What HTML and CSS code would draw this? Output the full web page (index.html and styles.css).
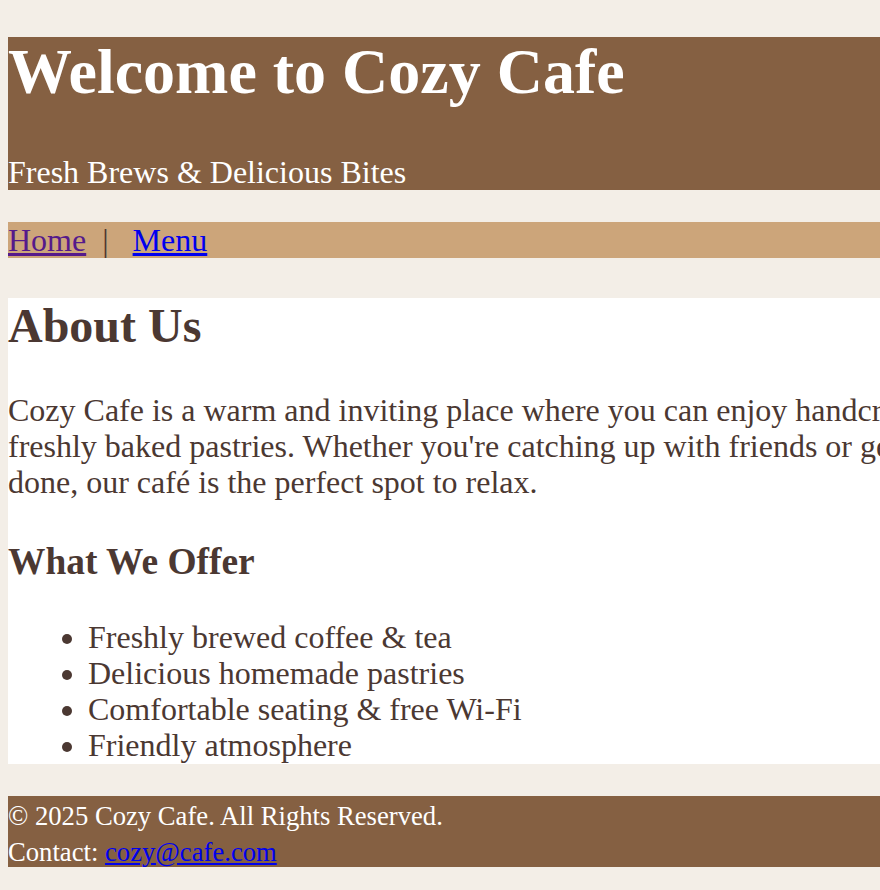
FILE: index.html
```html
<!DOCTYPE html>
<html lang="en">
<head>
<meta charset="utf-8">
<title>Cozy Cafe</title>
<link rel="stylesheet" href="styles.css">
</head>
<body>
<header class="site-header">
  <h1 class="site-title">Welcome to Cozy Cafe</h1>
  <p class="tagline">Fresh Brews &amp; Delicious Bites</p>
</header>
<nav class="site-nav">
  <a class="nav-link visited" href="#home">Home</a><span class="sep">|</span><a class="nav-link" href="#menu">Menu</a>
</nav>
<main class="content">
  <h2 class="section-title">About Us</h2>
  <p class="about">Cozy Cafe is a warm and inviting place where you can enjoy handcrafted coffee and freshly baked pastries. Whether you're catching up with friends or getting work done, our café is the perfect spot to relax.</p>
  <h3 class="sub-title">What We Offer</h3>
  <ul class="offer-list">
    <li>Freshly brewed coffee &amp; tea</li>
    <li>Delicious homemade pastries</li>
    <li>Comfortable seating &amp; free Wi-Fi</li>
    <li>Friendly atmosphere</li>
  </ul>
</main>
<footer class="site-footer">
  <p class="footer-line">&copy; 2025 Cozy Cafe. All Rights Reserved.</p>
  <p class="footer-line">Contact: <a class="mail-link" href="#contact">cozy@cafe.com</a></p>
</footer>
</body>
</html>
```
FILE: styles.css
```css
html {
  background: #f3eee7;
}

body {
  margin: 0;
  padding: 37px 8px 8px;
  width: 1086px;
  font-family: "Liberation Serif", "Times New Roman", serif;
  font-size: 32px;
  line-height: 36px;
  color: #4b3832;
  background: #f3eee7;
}

.site-header {
  background: #856042;
  color: #ffffff;
}

.site-title {
  margin: 0 0 47px;
  font-size: 64px;
  line-height: 69.6px;
  font-weight: bold;
}

.tagline {
  margin: 0 0 32px;
  line-height: 1.15;
}

.site-nav {
  margin: 0 0 40px;
  background: #cca57a;
}

.nav-link {
  color: #0000ee;
}

.nav-link.visited {
  color: #551a8b;
}

.sep {
  margin: 0 24px 0 16px;
}

.content {
  background: #ffffff;
}

.section-title {
  margin: 0 0 38px;
  font-size: 48px;
  line-height: 1.15;
  font-weight: bold;
}

.about {
  margin: 0 0 40px;
}

.sub-title {
  margin: 0 0 36px;
  font-size: 37.44px;
  line-height: 1.15;
  font-weight: bold;
}

.offer-list {
  margin: 0 0 32px;
  padding: 0 0 1px 80px;
}

.site-footer {
  box-sizing: border-box;
  height: 71px;
  padding-top: 2px;
  background: #856042;
  color: #ffffff;
}

.footer-line {
  margin: 0;
  font-size: 26.67px;
  line-height: 36px;
}

.mail-link {
  color: #0000ee;
}
```
